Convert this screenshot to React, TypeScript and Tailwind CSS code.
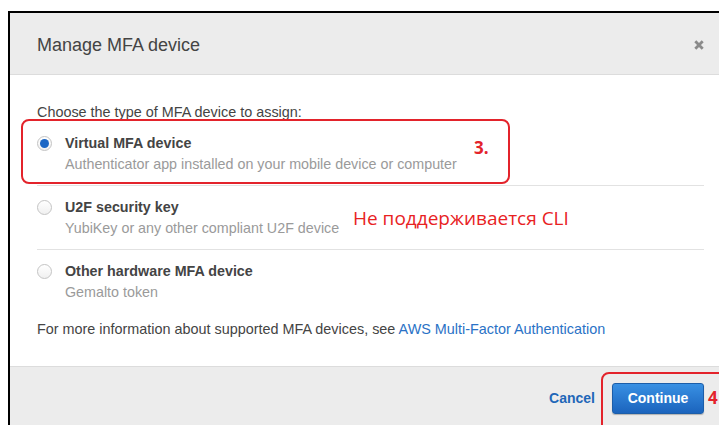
import React from "react";

type Option = {
  title: string;
  description: string;
  selected?: boolean;
};

const options: Option[] = [
  {
    title: "Virtual MFA device",
    description: "Authenticator app installed on your mobile device or computer",
    selected: true,
  },
  { title: "U2F security key", description: "YubiKey or any other compliant U2F device" },
  { title: "Other hardware MFA device", description: "Gemalto token" },
];

function Radio({ checked }: { checked?: boolean }) {
  return (
    <span className="flex h-[15px] w-[15px] shrink-0 items-center justify-center rounded-full border border-[#c4c4c4] bg-gradient-to-b from-[#ffffff] to-[#f0f0f0]">
      {checked && <span className="h-[9px] w-[9px] rounded-full bg-[#1b66c4]" />}
    </span>
  );
}

function CloseIcon() {
  return (
    <svg width="10" height="10" viewBox="0 0 10 10" aria-hidden="true">
      <path d="M1.3 1.3 L8.7 8.7 M8.7 1.3 L1.3 8.7" stroke="#8a8a8a" strokeWidth="2.8" strokeLinecap="butt" />
    </svg>
  );
}

export default function App() {
  return (
    <div
      className="relative h-[425px] w-[719px] overflow-hidden bg-white"
      style={{ fontFamily: '"Liberation Sans", Arial, sans-serif' }}
    >
      <div className="ml-[8px] mt-[11px] w-[711px] border-l-2 border-t-2 border-black">
        {/* header */}
        <div className="flex h-[62px] items-center justify-between border-b border-[#dcdcdc] bg-[#ececec] pl-[27px] pr-[15px] pt-[3px]">
          <h2 className="text-[18px] leading-[22px] text-[#444]">Manage MFA device</h2>
          <CloseIcon />
        </div>

        {/* body */}
        <div className="bg-white pb-[27px] pl-[27px] pr-[15px] pt-[27px]">
          <p className="text-[14.4px] leading-[20px] text-[#444]">Choose the type of MFA device to assign:</p>
          <div>
            {options.map((o, i) => (
              <div
                key={o.title}
                className={`flex gap-[13px] pb-[10px] pt-[11px] ${i < options.length - 1 ? "border-b border-[#e2e2e2]" : ""}`}
              >
                <div className="flex h-[21px] items-center">
                  <Radio checked={o.selected} />
                </div>
                <div className="text-[14.3px] leading-[21px]">
                  <div className="font-bold text-[#444]">{o.title}</div>
                  <div className="text-[#9a9a9a]">{o.description}</div>
                </div>
              </div>
            ))}
          </div>
          <p className="mt-[6px] text-[14.4px] leading-[20px] text-[#444]">
            For more information about supported MFA devices, see{" "}
            <a className="text-[#2a72c6]">AWS Multi-Factor Authentication</a>
          </p>
        </div>

        {/* footer */}
        <div className="flex items-center justify-end gap-[17px] border-t border-[#dcdcdc] bg-[#ececec] pb-[20px] pr-[15px] pt-[16px]">
          <button className="text-[14px] font-bold text-[#1f67b8]">Cancel</button>
          <button className="h-[31px] w-[92px] rounded-[3px] border border-[#1c5ea9] bg-gradient-to-b from-[#3990e3] to-[#1b64bd] text-[14px] font-bold text-white shadow-[0_1px_1px_rgba(0,0,0,0.25)]">
            Continue
          </button>
        </div>
      </div>

      {/* annotations */}
      <div className="absolute left-[21px] top-[119px] h-[65px] w-[489px] rounded-[8px] border-2 border-[#e3232b]" />
      <div
        className="absolute left-[474px] top-[137px] text-[17px] font-bold leading-[22px] text-[#e3232b]"
        style={{ fontFamily: '"Open Sans", sans-serif' }}
      >
        3.
      </div>
      <div
        className="absolute left-[353px] top-[205px] text-[19px] leading-[26px] text-[#e8221f]"
        style={{ fontFamily: '"Open Sans", sans-serif' }}
      >
        Не поддерживается CLI
      </div>
      <div className="absolute left-[601px] top-[372px] h-[80px] w-[160px] rounded-[8px] border-2 border-[#e3232b]" />
      <div
        className="absolute left-[708px] top-[387px] text-[17px] font-bold leading-[22px] text-[#e3232b]"
        style={{ fontFamily: '"Open Sans", sans-serif' }}
      >
        4
      </div>
    </div>
  );
}
